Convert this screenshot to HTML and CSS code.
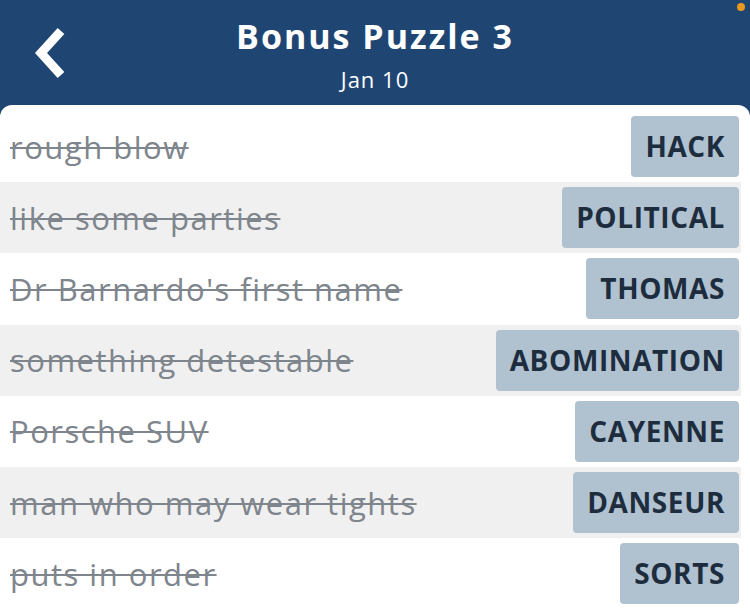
FILE: index.html
```html
<!DOCTYPE html>
<html>
<head>
  <title>Bonus Puzzle 3</title>
  <link rel="stylesheet" href="styles.css">
</head>
<body>
  <div class="top">
    <a class="back" href="#">
      <svg width="40" height="56" viewBox="0 0 40 56"><polyline points="26,6 6,28 26,50" fill="none" stroke="#fff" stroke-width="9" stroke-linejoin="miter"/></svg>
    </a>
    <div class="titles">
      <h1>Bonus Puzzle 3</h1>
      <div class="date">Jan 10</div>
    </div>
    <span class="dot"></span>
  </div>

  <div class="card">
    <div class="row"><span class="clue">rough blow</span><span class="ans">HACK</span></div>
    <div class="row"><span class="clue">like some parties</span><span class="ans">POLITICAL</span></div>
    <div class="row"><span class="clue">Dr Barnardo's first name</span><span class="ans">THOMAS</span></div>
    <div class="row"><span class="clue">something detestable</span><span class="ans">ABOMINATION</span></div>
    <div class="row"><span class="clue">Porsche SUV</span><span class="ans">CAYENNE</span></div>
    <div class="row"><span class="clue">man who may wear tights</span><span class="ans">DANSEUR</span></div>
    <div class="row"><span class="clue">puts in order</span><span class="ans">SORTS</span></div>
  </div>
</body>
</html>
```

FILE: styles.css
```css
body { margin: 0; background: #1f4673; font-family: "Open Sans", sans-serif; height: 610px; overflow: hidden; }
.top { position: relative; height: 105px; display: flex; justify-content: center; color: #fff; }
.back { position: absolute; left: 35px; top: 25px; }
.titles { text-align: center; padding-top: 14px; }
.titles h1 { margin: 0; font-size: 34px; font-weight: 700; line-height: 44px; letter-spacing: 2px; }
.date { font-size: 22px; line-height: 30px; letter-spacing: 1px; margin-top: 6px; }
.dot { position: absolute; right: 5px; top: 3px; width: 8px; height: 8px; border-radius: 50%; background: #e8991e; }
.card { background: #fff; border-radius: 12px 12px 0 0; padding: 6px 9px 0 0; height: 505px; box-sizing: border-box; overflow: hidden; }
.row { height: 71.2px; display: flex; align-items: center; justify-content: space-between; padding: 0 2px 0 10px; box-sizing: border-box; }
.row:nth-child(even) { background: #f0f0f0; }
.clue { font-size: 31px; letter-spacing: 1.5px; color: #7e858c; text-decoration: line-through; text-decoration-thickness: 2px; }
.ans { background: #b0c1d0; color: #1d2d3e; font-weight: 700; font-size: 28px; letter-spacing: 0.6px; height: 61px; line-height: 61px; padding: 0 14px; border-radius: 4px; }
```
